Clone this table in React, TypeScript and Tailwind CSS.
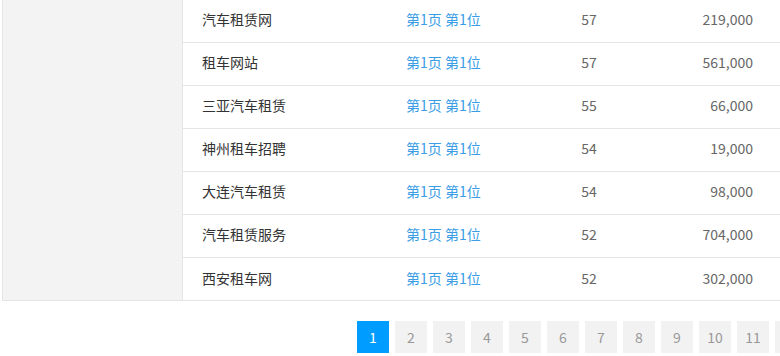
import React from "react";

const rows = [
  ["汽车租赁网", "57", "219,000"],
  ["租车网站", "57", "561,000"],
  ["三亚汽车租赁", "55", "66,000"],
  ["神州租车招聘", "54", "19,000"],
  ["大连汽车租赁", "54", "98,000"],
  ["汽车租赁服务", "52", "704,000"],
  ["西安租车网", "52", "302,000"],
];

const pages = ["1", "2", "3", "4", "5", "6", "7", "8", "9", "10", "11", "12"];

export default function App() {
  return (
    <div
      className="w-[780px] h-[356px] overflow-hidden bg-white text-[14px]"
      style={{ fontFamily: '"Noto Sans CJK SC", "Noto Sans", sans-serif' }}
    >
      <div className="ml-[2px] w-[900px] flex border-l border-b border-[#e5e5e5]">
        <div className="w-[180px] bg-[#f3f3f3] border-r border-[#e5e5e5]" />
        <div className="flex-1 flex flex-col">
          {rows.map((r, i) => (
            <div
              key={i}
              className={`flex items-center ${
                i < rows.length - 1 ? "h-[43px] pb-[3px] border-b border-[#e5e5e5]" : "h-[42px] pb-[2px]"
              }`}
            >
              <div className="w-[223px] pl-[19px] text-[#333]">{r[0]}</div>
              <div className="w-[150px] text-[#3a9de6]">第1页 第1位</div>
              <div className="w-[66px] text-center text-[#666]">{r[1]}</div>
              <div className="w-[131px] text-right text-[#666]">{r[2]}</div>
            </div>
          ))}
        </div>
      </div>
      <div className="flex gap-[6px] ml-[357px] mt-[20px]">
        {pages.map((p, i) => (
          <div
            key={p}
            className={`shrink-0 w-[32px] h-[32px] flex items-center justify-center ${
              i === 0 ? "bg-[#009cff] text-white" : "bg-[#f2f2f2] text-[#999]"
            }`}
          >
            {p}
          </div>
        ))}
      </div>
    </div>
  );
}
